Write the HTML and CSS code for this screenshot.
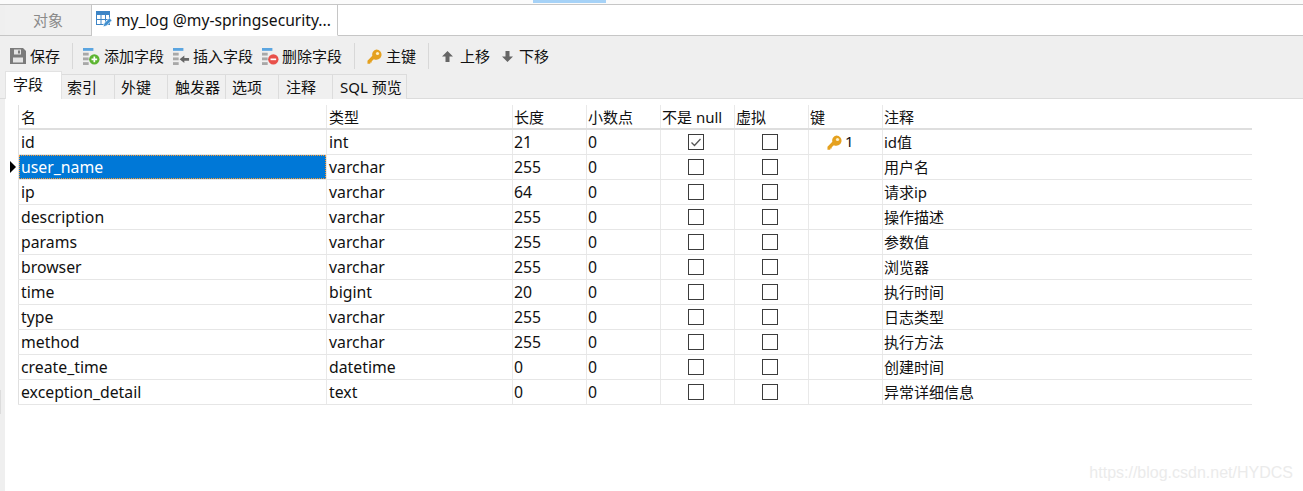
FILE: index.html
```html
<!DOCTYPE html>
<html lang="zh">
<head>
<meta charset="utf-8">
<title>my_log</title>
<link rel="stylesheet" href="styles.css">
</head>
<body>
<svg class="defs" width="0" height="0" aria-hidden="true">
  <defs>
    <symbol id="key" viewBox="0 0 16 16">
      <path d="M10 .5a5.500 5.500 0 1 1-2.700 10.300L5 13v1.300H3.500v1.400H.5v-3.200l5.200-5.200A5.500 5.500 0 0 1 10 .5z" fill="#e5a11f"/>
      <circle cx="11.200" cy="4.800" r="1.700" fill="#fdf0c8"/>
    </symbol>
    <symbol id="lines" viewBox="0 0 18 18">
      <rect x="0" y="0" width="11" height="3" fill="#5ba5e0"/>
      <rect x="0" y="5" width="6" height="3" fill="#a8a8a8"/>
      <rect x="0" y="10" width="6" height="3" fill="#a8a8a8"/>
      <rect x="0" y="15" width="6" height="3" fill="#a8a8a8"/>
    </symbol>
    <symbol id="box" viewBox="0 0 16 16">
      <rect x=".5" y=".5" width="15" height="15" fill="#fff" stroke="#3c3c3c"/>
    </symbol>
  </defs>
</svg>
<div class="topstrip"><span class="progress"></span></div>
<div class="doc-tabs">
  <div class="doc-tab">对象</div>
  <div class="doc-tab active">
    <svg class="tab-icon" viewBox="0 0 16 16"><rect x=".5" y=".5" width="13" height="13" fill="#fff" stroke="#3d85c6"/><rect x="0" y="0" width="14" height="4" fill="#3d85c6"/><path d="M5 4v10M9.500 4v10M1 8.500h12" stroke="#3d85c6"/><path d="M7 16l1.200-3.800 5.300-5.300 2.500 2.500-5.300 5.300z" fill="#3f8fd0" stroke="#fff" stroke-width=".7"/></svg>
    <span class="title">my_log @my-springsecurity...</span>
  </div>
</div>
<div class="toolbar">
  <div class="tool tool-save">
    <svg class="ico16" viewBox="0 0 16 16"><path d="M0 0h13l3 3v13H0z" fill="#7b7b7b"/><rect x="4" y="1.500" width="7" height="5" fill="#e4e4e4"/><rect x="8" y="2.500" width="2" height="3" fill="#7b7b7b"/><rect x="3" y="9.500" width="10" height="5" fill="#e4e4e4"/></svg>
    <span>保存</span>
  </div>
  <i class="sep"></i>
  <div class="tool tool-add">
    <svg class="ico18" viewBox="0 0 18 18"><use href="#lines"/><circle cx="12" cy="12" r="5.500" fill="#5cb531"/><path d="M9 12h6M12 9v6" stroke="#fff" stroke-width="1.800"/></svg>
    <span>添加字段</span>
  </div>
  <div class="tool">
    <svg class="ico18" viewBox="0 0 18 18"><use href="#lines"/><path d="M7 12l5-4v2.500h5v3h-5V16z" fill="#666"/></svg>
    <span>插入字段</span>
  </div>
  <div class="tool">
    <svg class="ico18" viewBox="0 0 18 18"><use href="#lines"/><circle cx="12" cy="12" r="5.500" fill="#e8504a"/><path d="M9 12h6" stroke="#fff" stroke-width="1.800"/></svg>
    <span>删除字段</span>
  </div>
  <i class="sep sep-b"></i>
  <div class="tool tool-key">
    <svg class="ico15"><use href="#key"/></svg>
    <span>主键</span>
  </div>
  <i class="sep sep-c"></i>
  <div class="tool tool-up">
    <svg class="ico11" viewBox="0 0 11 11"><path d="M5.500 0L11 5.500H7.500V11h-4V5.500H0z" fill="#666"/></svg>
    <span>上移</span>
  </div>
  <div class="tool tool-down">
    <svg class="ico11" viewBox="0 0 11 11"><path d="M5.500 11L11 5.500H7.500V0h-4v5.500H0z" fill="#666"/></svg>
    <span>下移</span>
  </div>
</div>
<div class="sub-tabs">
  <div class="sub-tab active w57">字段</div>
  <div class="sub-tab w53 p5">索引</div>
  <div class="sub-tab w53">外键</div>
  <div class="sub-tab w58 p7">触发器</div>
  <div class="sub-tab w53">选项</div>
  <div class="sub-tab w54 p7">注释</div>
  <div class="sub-tab w74 p7">SQL 预览</div>
</div>
<div class="content">
  <div class="grid">
    <div class="row head">
      <div class="sel"></div><div class="c zh">名</div><div class="c zh">类型</div><div class="c zh">长度</div><div class="c zh">小数点</div><div class="c zh">不是 null</div><div class="c zh">虚拟</div><div class="c zh">键</div><div class="c zh">注释</div>
    </div>
    <div class="row">
      <div class="sel"></div><div class="c">id</div><div class="c">int</div><div class="c">21</div><div class="c">0</div>
      <div class="c mid"><svg class="box"><use href="#box"/><path d="M3.500 8.500l3 3 6-6.500" fill="none" stroke="#555" stroke-width="1.300"/></svg></div>
      <div class="c mid"><svg class="box"><use href="#box"/></svg></div>
      <div class="c keycell"><svg class="ico15"><use href="#key"/></svg><span>1</span></div><div class="c zh">id值</div>
    </div>
    <div class="row">
      <div class="sel"><i class="arrow"></i></div><div class="c selected"><span>user_name</span></div><div class="c">varchar</div><div class="c">255</div><div class="c">0</div>
      <div class="c mid"><svg class="box"><use href="#box"/></svg></div><div class="c mid"><svg class="box"><use href="#box"/></svg></div><div class="c"></div><div class="c zh">用户名</div>
    </div>
    <div class="row">
      <div class="sel"></div><div class="c">ip</div><div class="c">varchar</div><div class="c">64</div><div class="c">0</div>
      <div class="c mid"><svg class="box"><use href="#box"/></svg></div><div class="c mid"><svg class="box"><use href="#box"/></svg></div><div class="c"></div><div class="c zh">请求ip</div>
    </div>
    <div class="row">
      <div class="sel"></div><div class="c">description</div><div class="c">varchar</div><div class="c">255</div><div class="c">0</div>
      <div class="c mid"><svg class="box"><use href="#box"/></svg></div><div class="c mid"><svg class="box"><use href="#box"/></svg></div><div class="c"></div><div class="c zh">操作描述</div>
    </div>
    <div class="row">
      <div class="sel"></div><div class="c">params</div><div class="c">varchar</div><div class="c">255</div><div class="c">0</div>
      <div class="c mid"><svg class="box"><use href="#box"/></svg></div><div class="c mid"><svg class="box"><use href="#box"/></svg></div><div class="c"></div><div class="c zh">参数值</div>
    </div>
    <div class="row">
      <div class="sel"></div><div class="c">browser</div><div class="c">varchar</div><div class="c">255</div><div class="c">0</div>
      <div class="c mid"><svg class="box"><use href="#box"/></svg></div><div class="c mid"><svg class="box"><use href="#box"/></svg></div><div class="c"></div><div class="c zh">浏览器</div>
    </div>
    <div class="row">
      <div class="sel"></div><div class="c">time</div><div class="c">bigint</div><div class="c">20</div><div class="c">0</div>
      <div class="c mid"><svg class="box"><use href="#box"/></svg></div><div class="c mid"><svg class="box"><use href="#box"/></svg></div><div class="c"></div><div class="c zh">执行时间</div>
    </div>
    <div class="row">
      <div class="sel"></div><div class="c">type</div><div class="c">varchar</div><div class="c">255</div><div class="c">0</div>
      <div class="c mid"><svg class="box"><use href="#box"/></svg></div><div class="c mid"><svg class="box"><use href="#box"/></svg></div><div class="c"></div><div class="c zh">日志类型</div>
    </div>
    <div class="row">
      <div class="sel"></div><div class="c">method</div><div class="c">varchar</div><div class="c">255</div><div class="c">0</div>
      <div class="c mid"><svg class="box"><use href="#box"/></svg></div><div class="c mid"><svg class="box"><use href="#box"/></svg></div><div class="c"></div><div class="c zh">执行方法</div>
    </div>
    <div class="row">
      <div class="sel"></div><div class="c">create_time</div><div class="c">datetime</div><div class="c">0</div><div class="c">0</div>
      <div class="c mid"><svg class="box"><use href="#box"/></svg></div><div class="c mid"><svg class="box"><use href="#box"/></svg></div><div class="c"></div><div class="c zh">创建时间</div>
    </div>
    <div class="row">
      <div class="sel"></div><div class="c">exception_detail</div><div class="c">text</div><div class="c">0</div><div class="c">0</div>
      <div class="c mid"><svg class="box"><use href="#box"/></svg></div><div class="c mid"><svg class="box"><use href="#box"/></svg></div><div class="c"></div><div class="c zh">异常详细信息</div>
    </div>
  </div>
  <div class="watermark">https://blog.csdn.net/HYDCS</div>
</div>
</body>
</html>
```
FILE: styles.css
```css
* { box-sizing: border-box; }
html, body { margin: 0; height: 100%; }
body {
  width: 1303px;
  height: 491px;
  overflow: hidden;
  background: #fff;
  color: #111;
  font: 15px/20px "Noto Sans", "Noto Sans CJK SC", sans-serif;
  display: flex;
  flex-direction: column;
}
.defs { position: absolute; }
svg { display: block; flex: none; }

.topstrip {
  height: 5px;
  flex: none;
  background: #fbfbfb;
  border-bottom: 1px solid #c6c6c6;
  padding-left: 533px;
}
.progress { display: block; width: 73px; height: 3px; background: #a6d2f7; }

.doc-tabs {
  height: 31px;
  flex: none;
  display: flex;
  padding-left: 5px;
  background: linear-gradient(to right, #efefef 5px, #fff 5px);
  border-bottom: 1px solid #c6c6c6;
}
.doc-tab {
  width: 87px;
  background: #f0f0f0;
  border-right: 1px solid #c6c6c6;
  color: #8a8a8a;
  display: flex;
  align-items: center;
  justify-content: center;
  margin-bottom: -1px;
  border-bottom: 1px solid #c6c6c6;
}
.doc-tab.active {
  width: 246px;
  background: #fff;
  color: #111;
  justify-content: flex-start;
  padding-left: 4px;
  gap: 4px;
  border-bottom-color: #fff;
  border-right-color: #c6c6c6;
}
.title { font-size: 15.65px; }
.tab-icon { width: 16px; height: 16px; margin-top: -3px; }

.toolbar {
  height: 35px;
  flex: none;
  background: #efefef;
  display: flex;
  align-items: center;
  padding: 5px 0 0 10px;
}
.tool { display: flex; align-items: center; gap: 3px; margin-right: 9px; }
.tool-save { gap: 4px; margin-right: 12px; }
.tool-add { gap: 4px; }
.tool-key { margin-left: 12px; margin-right: 12px; gap: 4px; }
.tool-up { margin-left: 13px; margin-right: 12px; gap: 7px; }
.tool-down { gap: 6px; margin-right: 0; }
.sep { width: 1px; height: 26px; background: #d8d8d8; margin-right: 10px; flex: none; }
.sep-b { margin-left: 3px; margin-right: 0; }
.sep-c { margin-right: 0; }
.ico16 { width: 16px; height: 16px; }
.ico18 { width: 17px; height: 17px; }
.ico15 { width: 15px; height: 15px; }
.ico11 { width: 11px; height: 11px; }

.sub-tabs {
  height: 28px;
  flex: none;
  background: #efefef;
  display: flex;
  align-items: flex-end;
  padding-left: 5px;
  border-bottom: 1px solid #dcdcdc;
}
.sub-tab {
  height: 25px;
  background: #f0f0f0;
  border-right: 1px solid #dcdcdc;
  border-top: 1px solid #dcdcdc;
  display: flex;
  align-items: center;
  padding-left: 6px;
  margin-bottom: -1px;
}
.sub-tab.p5 { padding-left: 5px; }
.sub-tab.p7 { padding-left: 7px; }
.sub-tab.active {
  height: 28px;
  background: #fff;
  border: 1px solid #e2e2e2;
  border-bottom: 0;
  padding: 0 0 3px 7px;
}
.w53 { width: 53px; }
.w54 { width: 54px; }
.w57 { width: 57px; }
.w58 { width: 58px; }
.w74 { width: 74px; }

.content {
  position: relative;
  flex: 1;
  border-left: 5px solid #efefef;
  padding: 6px 0 0 13px;
}
.content::before {
  content: "";
  position: absolute;
  left: -5px;
  top: 291px;
  width: 1px;
  height: 24px;
  background: #dcdcdc;
}
.grid { width: 1234px; display: grid; }
.row {
  display: grid;
  grid-template-columns: 1px 307px 186px 74px 74px 74px 74px 74px 369px;
  height: 25px;
  border-bottom: 1px solid #e6e6e6;
  position: relative;
}
.row.head { border-bottom: 2px solid #dedede; }
.sel { border-left: 1px solid #e0e0e0; position: relative; }
.c {
  border-left: 1px solid #e9e9e9;
  padding-left: 1px;
  font-size: 15.8px;
  line-height: 24px;
  white-space: nowrap;
  overflow: hidden;
}
.c.zh { font-size: 15px; }
.c:nth-child(2), .c:nth-child(3) { padding-left: 2px; }
.sel + .c { border-left: 0; }
.c.mid { display: flex; align-items: center; justify-content: center; padding: 0 3px 0 0; }
.box { width: 16px; height: 16px; }
.c.keycell { display: flex; align-items: center; gap: 3px; padding-left: 18px; font-size: 15px; }
.keycell span { margin-top: -3px; }
.selected {
  background: #0078d7;
  color: #fff;
  outline: 1px dotted #ff9a2e;
  outline-offset: -1px;
}
.arrow {
  position: absolute;
  left: -9px;
  top: 6px;
  border-left: 6px solid #000;
  border-top: 6px solid transparent;
  border-bottom: 6px solid transparent;
}
.watermark {
  position: absolute;
  right: 10px;
  bottom: 8px;
  font: 16px/20px "Liberation Sans", sans-serif;
  color: #ebebeb;
}
```
